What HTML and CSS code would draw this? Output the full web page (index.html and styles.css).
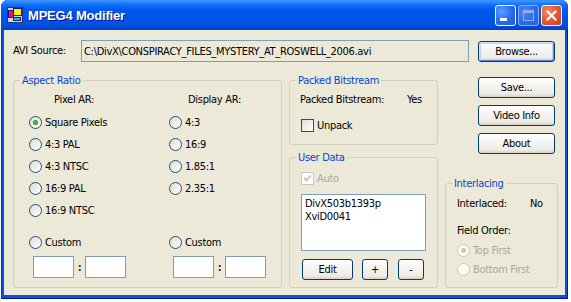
FILE: index.html
```html
<!DOCTYPE html>
<html lang="en">
<head>
  <meta charset="UTF-8" />
  <title>MPEG4 Modifier</title>
  <link rel="stylesheet" href="styles.css">
</head>
<body>
  <div class="window">
    <div class="titlebar">
      <svg class="app-icon" width="16" height="16" viewBox="0 0 16 16">
        <rect x="0.5" y="0.5" width="15" height="15" fill="#C8D4EC" stroke="#23337A"/>
        <rect x="1.5" y="3.5" width="5" height="7" fill="#E8167C" stroke="#1A1A80"/>
        <rect x="6.5" y="1.5" width="8" height="7" fill="#FFF200" stroke="#1A1A80"/>
        <rect x="6.5" y="10.5" width="7" height="3" fill="#16C0F0" stroke="#1A1A80"/>
      </svg>
      <span class="title">MPEG4 Modifier</span>
      <div class="caption-buttons">
        <span class="cap-btn min"><span class="min-bar"></span></span>
        <span class="cap-btn max disabled"><span class="max-box"></span></span>
        <span class="cap-btn close">
          <svg width="11" height="11" viewBox="0 0 11 11">
            <path d="M1.5 1.5 L9.5 9.5 M9.5 1.5 L1.5 9.5" stroke="#fff" stroke-width="2" stroke-linecap="square"/>
          </svg>
        </span>
      </div>
    </div>

    <div class="client">
      <div class="source-row">
        <label class="source-label" for="source">AVI Source:</label>
        <input class="textbox source" id="source" readonly value="C:\DivX\CONSPIRACY_FILES_MYSTERY_AT_ROSWELL_2006.avi" />
        <button class="btn browse">Browse...</button>
      </div>

      <div class="main">
        <!-- Aspect ratio -->
        <fieldset class="group aspect">
          <legend>Aspect Ratio</legend>
          <div class="ar-grid">
            <div class="col-head pixel">Pixel AR:</div>
            <div class="col-head display">Display AR:</div>
            <label class="opt"><input type="radio" class="radio" name="par" checked>Square Pixels</label>
            <label class="opt"><input type="radio" class="radio" name="dar">4:3</label>
            <label class="opt"><input type="radio" class="radio" name="par">4:3 PAL</label>
            <label class="opt"><input type="radio" class="radio" name="dar">16:9</label>
            <label class="opt"><input type="radio" class="radio" name="par">4:3 NTSC</label>
            <label class="opt"><input type="radio" class="radio" name="dar">1.85:1</label>
            <label class="opt"><input type="radio" class="radio" name="par">16:9 PAL</label>
            <label class="opt"><input type="radio" class="radio" name="dar">2.35:1</label>
            <label class="opt"><input type="radio" class="radio" name="par">16:9 NTSC</label>
            <div></div>
          </div>
          <div class="ar-custom">
            <label class="opt"><input type="radio" class="radio" name="par">Custom</label>
            <label class="opt"><input type="radio" class="radio" name="dar">Custom</label>
            <div class="ratio"><input class="textbox"><span class="colon">:</span><input class="textbox"></div>
            <div class="ratio"><input class="textbox"><span class="colon">:</span><input class="textbox"></div>
          </div>
        </fieldset>

        <div class="mid">
          <fieldset class="group packed">
            <legend>Packed Bitstream</legend>
            <div class="kv first"><span class="key packed-key">Packed Bitstream:</span><span>Yes</span></div>
            <label class="opt check-row"><span class="check"></span>Unpack</label>
          </fieldset>

          <fieldset class="group userdata">
            <legend>User Data</legend>
            <label class="opt check-row auto disabled">
              <span class="check">
                <svg width="11" height="11" viewBox="0 0 11 11">
                  <path d="M2 5 L4.2 7.3 L9 2.5" fill="none" stroke="#CAC8BB" stroke-width="2"/>
                </svg>
              </span>Auto
            </label>
            <div class="listbox">
              <div>DivX503b1393p</div>
              <div>XviD0041</div>
            </div>
            <div class="list-buttons">
              <button class="btn edit">Edit</button>
              <button class="btn small plus">+</button>
              <button class="btn small minus">-</button>
            </div>
          </fieldset>
        </div>

        <div class="side">
          <button class="btn side-btn save">Save...</button>
          <button class="btn side-btn">Video Info</button>
          <button class="btn side-btn">About</button>

          <fieldset class="group interlacing">
            <legend>Interlacing</legend>
            <div class="kv first"><span class="key inter-key">Interlaced:</span><span>No</span></div>
            <div class="field-order">Field Order:</div>
            <label class="opt small-row disabled"><input type="radio" class="radio" name="fo" checked disabled>Top First</label>
            <label class="opt small-row disabled"><input type="radio" class="radio" name="fo" disabled>Bottom First</label>
          </fieldset>
        </div>
      </div>
    </div>
  </div>
</body>
</html>
```

FILE: styles.css
```css
body {
  margin: 0;
  background: #fff;
  font-family: "DejaVu Sans Condensed", "Liberation Sans", Arial, sans-serif;
  font-size: 11px;
  letter-spacing: -0.3px;
  color: #000;
}
.window {
  margin-left: 1px;
  width: 567px;
  height: 299px;
  display: flex;
  flex-direction: column;
  background: #0055E5;
  border-radius: 7px 7px 0 0;
  overflow: hidden;
  box-shadow: inset 1px 0 #0831D9, inset -1px 0 #00138C, inset 0 -1px #00138C;
}
.titlebar {
  flex: none;
  height: 30px;
  display: flex;
  align-items: center;
  padding: 0 6px;
  background: linear-gradient(#3C8EF3 0, #3A93FF 1px, #1E7FFF 3px, #0B6AF7 6px, #0058EE 10px, #0055E9 50%, #0053E2 80%, #0048D5 93%, #003EC8 100%);
}
.app-icon {
  flex: none;
  margin-right: 5px;
}
.title {
  flex: 1;
  color: #fff;
  font-family: "Liberation Sans", Arial, sans-serif;
  font-weight: bold;
  font-size: 13px;
  letter-spacing: -0.2px;
  text-shadow: 1px 1px #0F1089;
}
.caption-buttons {
  display: flex;
  gap: 2px;
}
.cap-btn {
  position: relative;
  box-sizing: border-box;
  width: 21px;
  height: 21px;
  border: 1px solid #fff;
  border-radius: 3px;
  background: radial-gradient(circle at 30% 30%, #5C9CFF 0, #2A6FF0 50%, #1A55D8 100%);
  display: flex;
  align-items: center;
  justify-content: center;
}
.min-bar {
  position: absolute;
  left: 4px;
  top: 12px;
  width: 7px;
  height: 3px;
  background: #fff;
}
.cap-btn.disabled {
  border-color: #8EACF0;
  background: radial-gradient(circle at 30% 30%, #4C86F0 0, #2E68E6 60%, #2A5FDC 100%);
}
.max-box {
  box-sizing: border-box;
  width: 11px;
  height: 11px;
  border: 1px solid #8EACF0;
  border-top-width: 3px;
}
.cap-btn.close {
  background: radial-gradient(circle at 30% 30%, #F0876A 0, #E05A36 50%, #C8401C 100%);
}
.client {
  flex: 1;
  margin: 0 3px 4px 3px;
  padding: 10px 0 0 9px;
  background: #ECE9D8;
}
.source-row {
  display: flex;
  align-items: flex-start;
  height: 22px;
}
.source-label {
  width: 68px;
  line-height: 22px;
}
.textbox {
  box-sizing: border-box;
  height: 22px;
  border: 1px solid #7F9DB9;
  background: #fff;
  font: inherit;
  letter-spacing: inherit;
  padding: 0 2px;
  margin: 0;
  outline: none;
}
.textbox.source {
  width: 388px;
  background: #ECE9D8;
}
.btn {
  box-sizing: border-box;
  height: 21px;
  padding: 0;
  border: 1px solid #003C74;
  border-radius: 3px;
  background: linear-gradient(#FFFFFF 0, #F5F4F0 40%, #ECEBE6 85%, #D6D0C5 100%);
  font: inherit;
  letter-spacing: inherit;
  color: #000;
}
.browse {
  width: 77px;
  margin: 1px 0 0 9px;
  box-shadow: inset 1px 1px #CEE7FF, inset -1px -1px #6982EE, inset 0 0 0 2px #BCD4F6;
}
.main {
  margin-top: 12px;
  height: 214px;
  display: grid;
  grid-template-columns: 269px 149px 113px;
  column-gap: 7px;
}
.group {
  margin: 0;
  padding: 0;
  min-width: 0;
  border: 1px solid #D0D0BF;
  border-radius: 3px;
}
.group legend {
  margin-left: 6px;
  padding: 0 2px;
  line-height: 13px;
  color: #0046D5;
}
.opt {
  display: flex;
  align-items: center;
  white-space: nowrap;
}
.radio {
  appearance: none;
  box-sizing: border-box;
  flex: none;
  width: 13px;
  height: 13px;
  margin: 0 3px 0 0;
  border: 1px solid #1C5180;
  border-radius: 50%;
  background: linear-gradient(135deg, #DCDCD7, #FFFFFF);
}
.radio:checked {
  background: radial-gradient(circle, #5CD84E 0, #21A121 2px, transparent 3px), linear-gradient(135deg, #DCDCD7, #FFFFFF);
}
.disabled {
  color: #ACA899;
}
.disabled .radio {
  border-color: #CAC8BB;
  background: #FBFAF5;
}
.disabled .radio:checked {
  background: radial-gradient(circle, #CAC8BB 0, #CAC8BB 2px, transparent 3px), #FBFAF5;
}
.check {
  box-sizing: border-box;
  flex: none;
  width: 13px;
  height: 13px;
  margin-right: 3px;
  border: 1px solid #1C5180;
  background: linear-gradient(135deg, #DCDCD7, #FFFFFF);
}
.check svg {
  display: block;
  width: 11px;
  height: 11px;
}
.disabled .check {
  border-color: #CAC8BB;
  background: #fff;
}

/* Aspect ratio */
.ar-grid {
  padding: 1px 0 0 15px;
  display: grid;
  grid-template-columns: 140px 1fr;
  grid-template-rows: 23px repeat(5, 22px);
}
.col-head {
  align-self: center;
}
.col-head.pixel {
  padding-left: 25px;
}
.col-head.display {
  padding-left: 19px;
}
.ar-custom {
  margin-top: 10px;
  padding-left: 15px;
  display: grid;
  grid-template-columns: 140px 1fr;
  grid-template-rows: 22px 22px;
  row-gap: 3px;
}
.ratio {
  display: flex;
  align-items: center;
  padding-left: 4px;
}
.ratio .textbox {
  width: 41px;
}
.colon {
  width: 11px;
  text-align: center;
  font-weight: bold;
  color: #3A2A20;
}

/* Middle column */
.mid {
  display: flex;
  flex-direction: column;
  gap: 6px;
}
.packed {
  flex: none;
  height: 69px;
}
.kv {
  display: flex;
  align-items: center;
  height: 22px;
  padding-left: 10px;
}
.kv.first {
  margin-top: 1px;
}
.packed-key {
  width: 107px;
}
.check-row {
  height: 22px;
  margin-top: 4px;
  padding-left: 11px;
}
.userdata {
  flex: 1;
}
.check-row.auto {
  margin-top: 3px;
}
.listbox {
  box-sizing: border-box;
  width: 125px;
  height: 57px;
  margin: 5px 0 0 11px;
  padding: 2px 0 0 3px;
  border: 1px solid #7F9DB9;
  background: #fff;
  line-height: 13px;
}
.list-buttons {
  display: flex;
  margin-top: 8px;
  padding-left: 12px;
}
.edit {
  width: 51px;
}
.btn.small {
  width: 26px;
}
.plus {
  margin-left: 9px;
}
.minus {
  margin-left: 10px;
}

/* Right column */
.side {
  display: flex;
  flex-direction: column;
}
.side-btn {
  align-self: flex-end;
  width: 77px;
  margin: 7px 3px 0 0;
}
.side-btn.save {
  margin-top: 3px;
}
.interlacing {
  flex: 1;
  margin-top: 23px;
}
.interlacing .kv {
  margin-top: 2px;
  padding-left: 11px;
}
.inter-key {
  width: 73px;
}
.field-order {
  height: 18px;
  line-height: 18px;
  margin-top: 8px;
  padding-left: 11px;
}
.small-row {
  height: 19px;
  padding-left: 11px;
}
.small-row:first-of-type {
  margin-top: 1px;
}
```
